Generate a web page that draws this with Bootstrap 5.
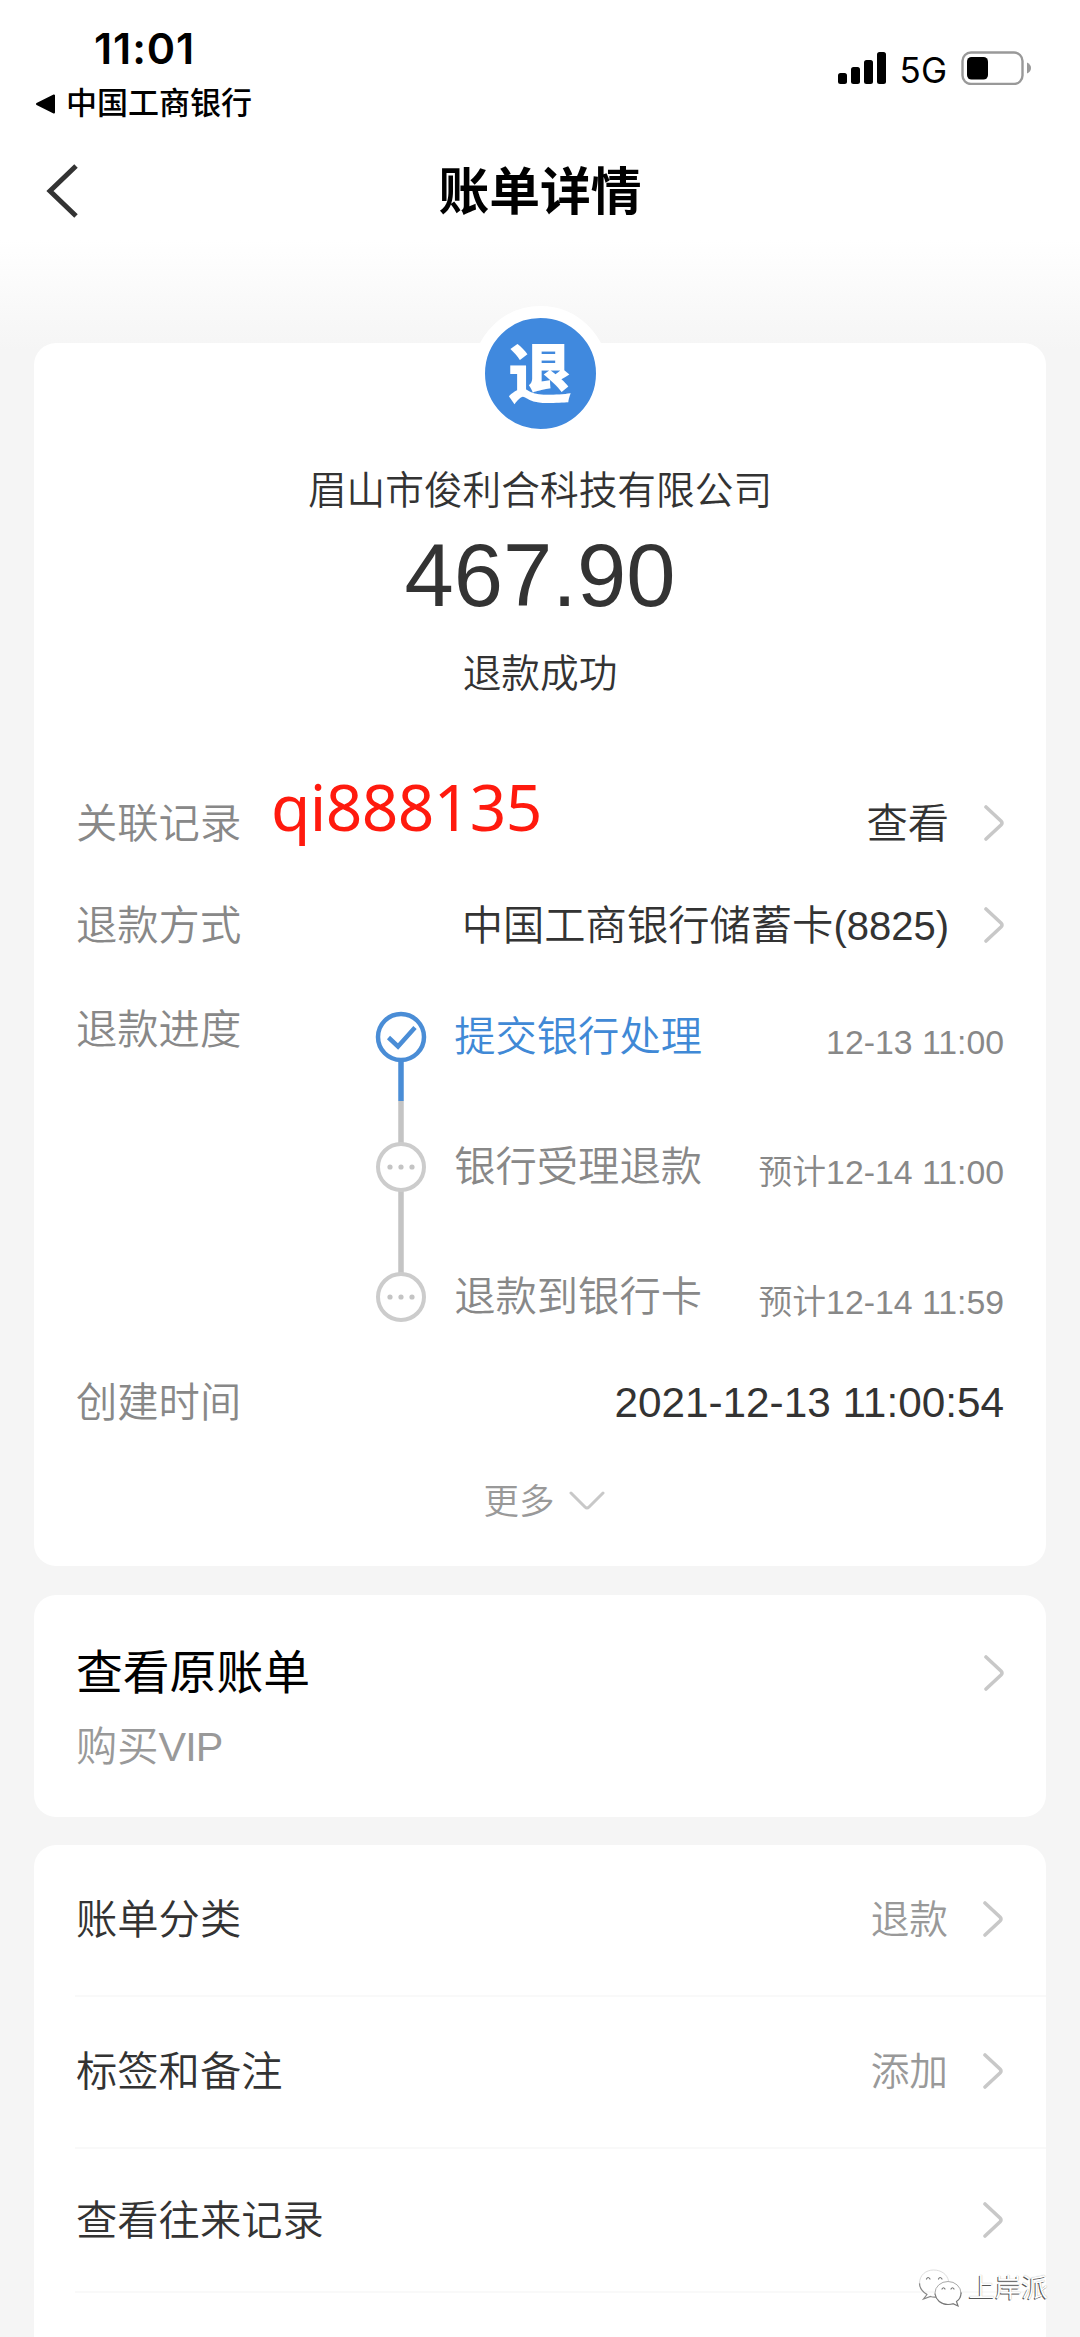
<!DOCTYPE html>
<html lang="zh-CN">
<head>
<meta charset="utf-8">
<meta name="viewport" content="width=device-width, initial-scale=1">
<title>账单详情</title>
<link href="https://cdn.jsdelivr.net/npm/bootstrap@5.3.0/dist/css/bootstrap.min.css" rel="stylesheet">
<style>
  body { background: #f5f5f5; color: #333; font-family: "Liberation Sans", "Noto Sans CJK SC", sans-serif; font-size: 41.3px; font-weight: 350; line-height: 1; }
  .screen { width: 1080px; height: 2337px; background: linear-gradient(#fff 0, #fff 240px, #f5f5f5 350px); }
  .statusbar { height: 130px; padding: 27px 49px 0 35px; color: #000; }
  .clock { font: 600 43px/43px Inter, sans-serif; padding-left: 59px; letter-spacing: .9px; }
  .backapp { font-size: 31px; line-height: 36px; font-weight: 500; gap: 10px; margin-top: 15.5px; }
  .net { font: 400 35px/36px Inter, sans-serif; margin: 1px 14px 0 13px; }
  .titlebar { height: 122px; padding: 0 46px; }
  .titlebar h1 { font-size: 50.8px; font-weight: 700; color: #000; line-height: 60px; padding-top: 3px; }
  .titlebar-side { width: 34px; }
  .panel { background: #fff; border-radius: 22px; margin: 0 34px; }
  .panel-main { margin-top: 91px; height: 1223px; }
  .summary { height: 428.7px; }
  .refund { width: 135px; height: 135px; margin-top: -37px; border-radius: 50%; background: #4089de; border: 12px solid #fff; color: #fff; font-size: 64px; font-weight: 900; padding-top: 2px; }
  .company { font-size: 38.7px; line-height: 50px; margin-top: 25px; }
  .amount { font-size: 88.6px; line-height: 90px; margin-top: 15px; font-weight: 400; }
  .state { font-size: 38.7px; line-height: 50px; margin-top: 28px; }
  .line { height: 102.5px; padding: 0 42px; }
  .line > span, .option > span { padding-top: 3px; }
  .tag { color: #888; }
  .soft { color: #999; }
  .chev { width: 20px; height: 36px; margin-left: 35px; fill: none; stroke: #c8c8c8; stroke-width: 3.6; stroke-linecap: round; stroke-linejoin: round; }
  .card-no { font-size: 40px; }
  .stamp { font: 64px/64px "Noto Sans", sans-serif; color: #ff1a0e; left: 237px; top: 0; letter-spacing: -.6px; }
  .progress-line { height: 374px; padding: 0 42px; }
  .progress-tag { line-height: 102.5px; padding-top: 2px; }
  .rail { margin: 31px 27px 0 134px; flex: none; }
  .steps { padding-top: 40.5px; }
  .step { height: 130px; }
  .step-name { color: #888; }
  .step-time { font-size: 33.8px; color: #888; padding-top: 9px; }
  .step-name.blue { color: #4089d6; }
  .created-at { font-size: 42.3px; }
  .more { height: 96px; font-size: 35.5px; gap: 14px; padding-left: 8px; }
  .more span { padding-top: 3px; }
  .panel-origin { margin-top: 29px; height: 222px; padding: 51px 42px 0; }
  .origin-title { font-size: 46.8px; line-height: 52px; font-weight: 400; color: #000; padding-top: 1px; }
  .origin-sub { line-height: 50px; margin-top: 23px; }
  .latin { letter-spacing: -1px; }
  .panel-options { margin-top: 28px; height: 492px; border-radius: 22px 22px 0 0; padding-left: 41px; }
  .option { height: 152px; padding: 0 43px 2px 1px; border-bottom: 2px solid #f9f9f9; }
  .option-last { height: 144px; padding-bottom: 0; }
  .option-value { font-size: 38.7px; }
  .watermark { right: 32px; bottom: 29px; gap: 7px; font-size: 26.5px; color: #fff; text-shadow: -1px 1px 0 #555, 0 0 1px #999; }
</style>
</head>
<body class="overflow-hidden">
<div class="screen position-relative overflow-hidden">
  <header>
    <div class="statusbar d-flex justify-content-between">
      <div>
        <div class="clock">11:01</div>
        <div class="backapp d-flex align-items-center">
          <svg width="21" height="20" viewBox="0 0 21 20"><path d="M2 10 19 1.5v17z" stroke="#000" stroke-width="2" stroke-linejoin="round"/></svg>
          <span>中国工商银行</span>
        </div>
      </div>
      <div class="d-flex align-items-start pt-4">
        <svg width="49" height="34" viewBox="0 0 49 34"><rect y="22" width="9" height="11" rx="2.5"/><rect x="13" y="16" width="9" height="17" rx="2.5"/><rect x="26" y="9" width="9" height="24" rx="2.5"/><rect x="39" y="1" width="9" height="32" rx="2.5"/></svg>
        <span class="net">5G</span>
        <svg width="70" height="34" viewBox="0 0 70 34"><rect x="1.5" y="1.5" width="60" height="31.5" rx="8.5" fill="none" stroke="#999" stroke-width="2.4"/><rect x="6" y="6" width="21" height="22.5" rx="4.5"/><path d="M66 11.5q4 2 4 5.5t-4 5.5z" fill="#999"/></svg>
      </div>
    </div>
    <div class="titlebar d-flex align-items-center justify-content-between">
      <svg width="34" height="56" viewBox="0 0 34 56" fill="none" stroke="#333" stroke-width="5"><path d="M30 3 4 28l26 25"/></svg>
      <h1 class="m-0">账单详情</h1>
      <span class="titlebar-side"></span>
    </div>
  </header>

  <main>
    <section class="panel panel-main">
      <div class="summary d-flex flex-column align-items-center">
        <div class="refund d-flex align-items-center justify-content-center flex-shrink-0">退</div>
        <div class="company">眉山市俊利合科技有限公司</div>
        <div class="amount">467.90</div>
        <div class="state">退款成功</div>
      </div>
      <div class="line position-relative d-flex align-items-center">
        <span class="tag me-auto">关联记录</span>
        <span class="stamp position-absolute">qi888135</span>
        <span>查看</span>
        <svg class="chev" viewBox="0 0 20 36"><path d="M2 2 17 16q2 2 0 4L2 34"/></svg>
      </div>
      <div class="line d-flex align-items-center">
        <span class="tag me-auto">退款方式</span>
        <span>中国工商银行储蓄卡<span class="card-no">(8825)</span></span>
        <svg class="chev" viewBox="0 0 20 36"><path d="M2 2 17 16q2 2 0 4L2 34"/></svg>
      </div>
      <div class="progress-line d-flex align-items-start">
        <span class="tag progress-tag">退款进度</span>
        <svg class="rail" width="52" height="314" viewBox="0 0 52 314" fill="none">
          <path d="M26 93v43M26 183v82" stroke="#c4c4c4" stroke-width="5.5"/>
          <path d="M26 53v40" stroke="#4a8dd6" stroke-width="5.5"/>
          <circle cx="26" cy="29" r="23" stroke="#4a8dd6" stroke-width="4.5"/>
          <path d="M13.500 29.500l9.500 9 17-19" stroke="#4a8dd6" stroke-width="4.5"/>
          <g stroke="#ccc" stroke-width="4"><circle cx="26" cy="159" r="23"/><circle cx="26" cy="289" r="23"/></g>
          <g fill="#c4c4c4"><circle cx="15" cy="159" r="2.6"/><circle cx="26" cy="159" r="2.6"/><circle cx="37" cy="159" r="2.6"/><circle cx="15" cy="289" r="2.6"/><circle cx="26" cy="289" r="2.6"/><circle cx="37" cy="289" r="2.6"/></g>
        </svg>
        <div class="steps flex-grow-1">
          <div class="step d-flex justify-content-between"><span class="step-name blue">提交银行处理</span><span class="step-time">12-13 11:00</span></div>
          <div class="step d-flex justify-content-between"><span class="step-name">银行受理退款</span><span class="step-time">预计12-14 11:00</span></div>
          <div class="step d-flex justify-content-between"><span class="step-name">退款到银行卡</span><span class="step-time">预计12-14 11:59</span></div>
        </div>
      </div>
      <div class="line d-flex align-items-center justify-content-between">
        <span class="tag">创建时间</span>
        <span class="created-at">2021-12-13 11:00:54</span>
      </div>
      <div class="more soft d-flex align-items-center justify-content-center">
        <span>更多</span>
        <svg width="36" height="20" viewBox="0 0 36 20" fill="none" stroke="#c8c8c8" stroke-width="3" stroke-linecap="round" stroke-linejoin="round"><path d="M2 2 16 16q2 2 4 0L34 2"/></svg>
      </div>
    </section>

    <section class="panel panel-origin">
      <div class="d-flex align-items-center justify-content-between">
        <span class="origin-title">查看原账单</span>
        <svg class="chev" viewBox="0 0 20 36"><path d="M2 2 17 16q2 2 0 4L2 34"/></svg>
      </div>
      <div class="origin-sub soft">购买<span class="latin">VIP</span></div>
    </section>

    <section class="panel panel-options">
      <div class="option d-flex align-items-center">
        <span class="me-auto">账单分类</span>
        <span class="option-value soft">退款</span>
        <svg class="chev" viewBox="0 0 20 36"><path d="M2 2 17 16q2 2 0 4L2 34"/></svg>
      </div>
      <div class="option d-flex align-items-center">
        <span class="me-auto">标签和备注</span>
        <span class="option-value soft">添加</span>
        <svg class="chev" viewBox="0 0 20 36"><path d="M2 2 17 16q2 2 0 4L2 34"/></svg>
      </div>
      <div class="option option-last d-flex align-items-center">
        <span class="me-auto">查看往来记录</span>
        <svg class="chev" viewBox="0 0 20 36"><path d="M2 2 17 16q2 2 0 4L2 34"/></svg>
      </div>
    </section>
  </main>

  <div class="watermark position-absolute d-flex align-items-center">
    <svg width="44" height="40" viewBox="0 0 44 40" fill="#fff" stroke-linecap="round">
      <path d="M9 26.5 5.5 31l7-2.5c2 .6 4 .7 6 .4M9 26.5C4 23.5 1.500 19.5 1.5 15" stroke="#888" stroke-width="1.2"/>
      <path d="M1.5 15C1.5 7 8 2 15.500 2S29 6 30.5 12.5" fill="none" stroke="#ddd" stroke-width="1"/>
      <ellipse cx="30" cy="25" rx="13" ry="11.5" stroke="#aaa" stroke-width="1"/>
      <path d="M17 26c1 6 6 10.5 13 10.5 2 0 3.5-.3 5-.8l5 2.3-1.5-4.500c3-2 4.500-5 4.500-8.500" stroke="#777" stroke-width="1.2"/>
      <path d="M8.5 11q1.5-3 3.5 0M20.5 11q1.5-3 3.5 0M24 21q1.5-2.5 3 0M33 21q1.5-2.5 3 0" fill="none" stroke="#777" stroke-width="1.2"/>
    </svg>
    <span>上岸派</span>
  </div>
</div>
<script src="https://cdn.jsdelivr.net/npm/bootstrap@5.3.0/dist/js/bootstrap.bundle.min.js"></script>
</body>
</html>
